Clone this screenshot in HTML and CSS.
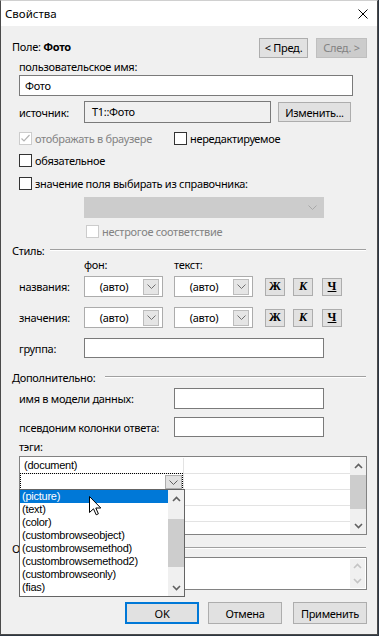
FILE: index.html
```html
<!DOCTYPE html>
<html lang="ru">
<head>
  <meta charset="UTF-8">
  <meta name="viewport" content="width=device-width, initial-scale=1.0">
  <title>Свойства</title>
  <link rel="stylesheet" href="styles.css">
</head>
<body>
<div class="window">
  <div class="titlebar">
    <span class="title">Свойства</span>
    <svg class="close" width="10" height="10" viewBox="0 0 10 10"><path d="M0.5 0.5L9.5 9.5M9.5 0.5L0.5 9.5" stroke="#000" stroke-width="1"/></svg>
  </div>

  <div class="client">
    <div class="head">
      <span class="field">Поле: <b>Фото</b></span>
      <button class="btn prev">&lt; Пред.</button>
      <button class="btn next" disabled>След. &gt;</button>
    </div>

    <div class="lbl ind">пользовательское имя:</div>
    <div class="edit ind name-edit">Фото</div>

    <div class="row src-row ind">
      <span class="cap">источник:</span>
      <div class="edit src-edit">T1::Фото</div>
      <button class="btn change">Изменить...</button>
    </div>

    <div class="row check-row ind r1">
      <span class="cb-wrap first">
        <span class="cb off"><svg width="11" height="11" viewBox="0 0 11 11"><path d="M1.5 5.5L4 8L9.5 2" fill="none" stroke="#b4b4b4" stroke-width="1.2"/></svg></span>
        <span class="cb-text off">отображать в браузере</span>
      </span>
      <span class="cb-wrap"><span class="cb"></span><span class="cb-text">нередактируемое</span></span>
    </div>
    <div class="row check-row ind r2">
      <span class="cb-wrap"><span class="cb"></span><span class="cb-text">обязательное</span></span>
    </div>
    <div class="row check-row ind r3">
      <span class="cb-wrap"><span class="cb"></span><span class="cb-text">значение поля выбирать из справочника:</span></span>
    </div>

    <div class="combo-off">
      <svg width="9" height="5" viewBox="0 0 9 5"><path d="M0.5 0.5L4.5 4.5L8.5 0.5" fill="none" stroke="#a8a8a8"/></svg>
    </div>
    <div class="row check-row loose">
      <span class="cb-wrap"><span class="cb off"></span><span class="cb-text off">нестрогое соответствие</span></span>
    </div>

    <div class="group g-style"><span>Стиль:</span></div>
    <div class="heads"><span>фон:</span><span>текст:</span></div>

    <div class="row style-row ind sr1">
      <span class="cap">названия:</span>
      <div class="combo"><span class="combo-text">(авто)</span><span class="drop"><svg width="9" height="5" viewBox="0 0 9 5"><path d="M0.5 0.5L4.5 4.5L8.5 0.5" fill="none" stroke="#707070"/></svg></span></div>
      <div class="combo"><span class="combo-text">(авто)</span><span class="drop"><svg width="9" height="5" viewBox="0 0 9 5"><path d="M0.5 0.5L4.5 4.5L8.5 0.5" fill="none" stroke="#707070"/></svg></span></div>
      <button class="btn fmt b">Ж</button>
      <button class="btn fmt i">К</button>
      <button class="btn fmt u">Ч</button>
    </div>
    <div class="row style-row ind sr2">
      <span class="cap">значения:</span>
      <div class="combo"><span class="combo-text">(авто)</span><span class="drop"><svg width="9" height="5" viewBox="0 0 9 5"><path d="M0.5 0.5L4.5 4.5L8.5 0.5" fill="none" stroke="#707070"/></svg></span></div>
      <div class="combo"><span class="combo-text">(авто)</span><span class="drop"><svg width="9" height="5" viewBox="0 0 9 5"><path d="M0.5 0.5L4.5 4.5L8.5 0.5" fill="none" stroke="#707070"/></svg></span></div>
      <button class="btn fmt b">Ж</button>
      <button class="btn fmt i">К</button>
      <button class="btn fmt u">Ч</button>
    </div>
    <div class="row group-row ind">
      <span class="cap">группа:</span>
      <div class="edit wide"></div>
    </div>

    <div class="group g-extra"><span>Дополнительно:</span></div>
    <div class="row x1 ind">
      <span class="cap-wide">имя в модели данных:</span>
      <div class="edit short"></div>
    </div>
    <div class="row x2 ind">
      <span class="cap-wide">псевдоним колонки ответа:</span>
      <div class="edit short"></div>
    </div>
    <div class="lbl tags-lbl ind">тэги:</div>

    <div class="grid ind">
      <div class="grid-body">
        <div class="grid-row"><span class="c1">(document)</span><span class="c2"></span></div>
        <div class="grid-row">
          <span class="c1">
            <span class="editor"><span class="ed-drop"><svg width="9" height="5" viewBox="0 0 9 5"><path d="M0.5 0.5L4.5 4.5L8.5 0.5" fill="none" stroke="#606060"/></svg></span></span>
          </span>
          <span class="c2"></span>
        </div>
        <div class="grid-row"><span class="c1"></span><span class="c2"></span></div>
        <div class="grid-row"><span class="c1"></span><span class="c2"></span></div>
        <div class="grid-row"><span class="c1"></span><span class="c2"></span></div>
      </div>
      <div class="vscroll">
        <span class="arrow"><svg width="9" height="6" viewBox="0 0 9 6"><path d="M1 5L4.5 1.5L8 5" fill="none" stroke="#606060" stroke-width="1.6"/></svg></span>
        <span class="thumb grid-thumb"></span>
        <span class="fill"></span>
        <span class="arrow"><svg width="9" height="6" viewBox="0 0 9 6"><path d="M1 1L4.5 4.5L8 1" fill="none" stroke="#606060" stroke-width="1.6"/></svg></span>
      </div>

      <div class="popup">
        <div class="items">
          <div class="item sel">(picture)</div>
          <div class="item">(text)</div>
          <div class="item">(color)</div>
          <div class="item">(custombrowseobject)</div>
          <div class="item">(custombrowsemethod)</div>
          <div class="item">(custombrowsemethod2)</div>
          <div class="item">(custombrowseonly)</div>
          <div class="item">(fias)</div>
        </div>
        <div class="vscroll">
          <span class="arrow"><svg width="9" height="6" viewBox="0 0 9 6"><path d="M1 5L4.5 1.5L8 5" fill="none" stroke="#606060" stroke-width="1.6"/></svg></span>
          <span class="thumb popup-thumb"></span>
          <span class="fill"></span>
          <span class="arrow"><svg width="9" height="6" viewBox="0 0 9 6"><path d="M1 1L4.5 4.5L8 1" fill="none" stroke="#606060" stroke-width="1.6"/></svg></span>
        </div>
      </div>
    </div>

    <div class="group g-desc"><span class="clip">О</span></div>
    <div class="memo ind">
      <div class="vscroll dim">
        <span class="arrow"><svg width="9" height="6" viewBox="0 0 9 6"><path d="M1 5L4.5 1.5L8 5" fill="none" stroke="#c4c4c4" stroke-width="1.6"/></svg></span>
        <span class="fill"></span>
        <span class="arrow"><svg width="9" height="6" viewBox="0 0 9 6"><path d="M1 1L4.5 4.5L8 1" fill="none" stroke="#c4c4c4" stroke-width="1.6"/></svg></span>
      </div>
    </div>

    <div class="buttons">
      <button class="btn dlg ok">OK</button>
      <button class="btn dlg cancel">Отмена</button>
      <button class="btn dlg apply">Применить</button>
    </div>
  </div>

  <svg class="cursor" width="13" height="20" viewBox="0 0 13 20"><path d="M0.5 0.5L0.5 16.5L4.5 12.8L7.2 18.8L9.4 17.8L6.8 12L11.8 12Z" fill="#fff" stroke="#000" stroke-width="1"/></svg>
</div>
</body>
</html>
```

FILE: styles.css
```css
* {
  box-sizing: border-box;
}

body {
  margin: 0;
  background: #2d3642;
  font-family: "Noto Sans", sans-serif;
  font-size: 11px;
  letter-spacing: -0.3px;
  color: #000;
}

.window {
  position: relative;
  width: 378px;
  height: 635px;
  background: #f0f0f0;
  border: 1px solid #4a4a4a;
  border-top-color: #d0d0d0;
}

.titlebar {
  height: 25px;
  background: #fff;
  display: flex;
  align-items: center;
  padding: 0 9px 0 4px;
}

.title {
  flex: 1;
  font-size: 11.5px;
  letter-spacing: 0;
}

.client {
  padding: 11px 10px 0 11px;
}

.ind {
  margin-left: 7px;
}

.row {
  display: flex;
  align-items: center;
}

/* buttons */
.btn {
  font: inherit;
  letter-spacing: inherit;
  color: #000;
  background: #e1e1e1;
  border: 1px solid #adadad;
  padding: 0;
  height: 20px;
}

.head {
  display: flex;
  align-items: center;
  height: 21px;
}

.field {
  flex: 1;
  padding-bottom: 2px;
}

.prev {
  width: 49px;
}

.next {
  width: 51px;
  margin-left: 8px;
  color: #838383;
  background: #cccccc;
  border-color: #bfbfbf;
}

.lbl {
  height: 16px;
  line-height: 16px;
  margin-top: 1px;
}

.edit {
  background: #fff;
  border: 1px solid #7a7a7a;
  height: 21px;
  line-height: 19px;
  padding-left: 5px;
}

.name-edit {
  width: 334px;
}

.src-row {
  height: 22px;
  margin-top: 5px;
}

.cap {
  width: 65px;
}

.cap-wide {
  width: 155px;
}

.src-edit {
  width: 187px;
  height: 22px;
  line-height: 20px;
  background: #f0f0f0;
  padding-left: 7px;
}

.change {
  width: 73px;
  margin-left: 7px;
}

/* checkboxes */
.check-row {
  height: 15px;
}

.r1 { margin-top: 8px; }
.r2 { margin-top: 7px; }
.r3 { margin-top: 8px; }

.cb-wrap {
  display: flex;
  align-items: center;
}

.cb-wrap.first {
  width: 155px;
}

.cb {
  width: 13px;
  height: 13px;
  border: 1px solid #333;
  background: #fff;
  display: flex;
  align-items: center;
  justify-content: center;
}

.cb.off {
  border-color: #cccccc;
}

.cb-text {
  margin-left: 3px;
}

.cb-text.off {
  color: #838383;
}

.combo-off {
  margin: 6px 0 0 72px;
  width: 240px;
  height: 21px;
  background: #cccccc;
  border: 1px solid #cccccc;
  display: flex;
  align-items: center;
  justify-content: flex-end;
  padding-right: 6px;
}

.loose {
  margin: 6px 0 0 74px;
}

/* group headers */
.group {
  display: flex;
  align-items: center;
  height: 14px;
  width: 354px;
}

.group::after {
  content: "";
  flex: 1;
  border-top: 1px solid #a0a0a0;
  border-bottom: 1px solid #fff;
}

.g-style { margin-top: 4px; }
.g-style span { padding-right: 6px; }
.g-extra { margin-top: 12px; }
.g-extra span { padding-right: 10px; }
.g-desc { margin-top: 6px; }
.g-desc span { width: 7px; }

.heads {
  display: flex;
  height: 14px;
  line-height: 14px;
  margin-top: 1px;
  padding-left: 72px;
}

.heads span:first-child {
  width: 90px;
}

/* style rows */
.style-row {
  height: 21px;
}

.sr1 { margin-top: 4px; }
.sr2 { margin-top: 10px; }

.combo {
  width: 79px;
  height: 21px;
  background: #fff;
  border: 1px solid #acacac;
  display: flex;
  align-items: center;
  padding-right: 3px;
}

.combo + .combo {
  margin-left: 11px;
}

.combo-text {
  flex: 1;
  text-align: center;
}

.drop {
  width: 16px;
  height: 16px;
  background: #e5e5e5;
  border: 1px solid #bcbcbc;
  display: flex;
  align-items: center;
  justify-content: center;
}

.fmt {
  width: 20px;
  height: 18px;
  font-family: "Liberation Serif", serif;
  font-weight: bold;
  font-size: 12px;
  letter-spacing: 0;
  margin-left: 8px;
}

.fmt.b { margin-left: 12px; }
.fmt.i { font-style: italic; }
.fmt.u { text-decoration: underline; margin-left: 9px; }

.group-row {
  height: 20px;
  margin-top: 10px;
}

.edit.wide {
  width: 240px;
  height: 20px;
}

.x1 {
  height: 21px;
  margin-top: 4px;
}

.x2 {
  height: 20px;
  margin-top: 8px;
}

.x2 .edit {
  height: 20px;
}

.edit.short {
  width: 150px;
}

.tags-lbl {
  height: 14px;
  line-height: 14px;
  margin-top: 3px;
}

/* tags grid */
.grid {
  position: relative;
  margin-top: 2px;
  width: 348px;
  height: 79px;
  border: 1px solid #828282;
  background: #fff;
  display: flex;
  font-family: "Liberation Sans", sans-serif;
  font-size: 11px;
  letter-spacing: -0.25px;
}

.grid-body {
  flex: 1;
  padding-top: 1px;
  overflow: hidden;
}

.grid-row {
  display: flex;
  height: 16px;
  border-bottom: 1px solid #e3e3e3;
}

.grid-row .c1 {
  position: relative;
  width: 164px;
  border-right: 1px solid #e3e3e3;
  padding-left: 4px;
  line-height: 15px;
}

.grid-row .c2 {
  flex: 1;
}

.editor {
  position: absolute;
  top: -1px;
  left: 0;
  right: 0;
  bottom: -1px;
  border: 1px dotted #000;
}

.ed-drop {
  position: absolute;
  top: 1px;
  right: 0;
  width: 17px;
  height: 14px;
  background: #e1e1e1;
  border: 1px solid #adadad;
  display: flex;
  align-items: center;
  justify-content: center;
}

.vscroll {
  width: 16px;
  background: #f0f0f0;
  display: flex;
  flex-direction: column;
}

.vscroll .arrow {
  height: 17px;
  display: flex;
  align-items: center;
  justify-content: center;
}

.vscroll .fill {
  flex: 1;
}

.thumb {
  background: #cdcdcd;
}

.grid-thumb {
  margin-top: 1px;
  height: 34px;
}

.popup {
  position: absolute;
  left: -1px;
  top: 32px;
  width: 166px;
  height: 108px;
  border: 1px solid #646464;
  background: #fff;
  display: flex;
}

.items {
  flex: 1;
}

.item {
  height: 13px;
  line-height: 13px;
  padding-left: 2px;
  white-space: nowrap;
}

.item.sel {
  background: #0078d7;
  color: #fff;
}

.popup-thumb {
  margin-top: 12px;
  height: 48px;
}

.memo {
  margin-top: 2px;
  width: 348px;
  height: 33px;
  border: 1px solid #828282;
  background: #fff;
  padding: 1px;
  display: flex;
  justify-content: flex-end;
}

.vscroll.dim {
  width: 15px;
}

.vscroll.dim .arrow {
  height: 14px;
}

/* dialog buttons */
.buttons {
  display: flex;
  justify-content: flex-end;
  height: 22px;
  margin-top: 12px;
}

.dlg {
  width: 74px;
  height: 22px;
}

.ok {
  border: 2px solid #0078d7;
}

.cancel {
  margin-left: 9px;
}

.apply {
  margin-left: 11px;
}

.cursor {
  position: absolute;
  left: 88px;
  top: 495px;
}
```
